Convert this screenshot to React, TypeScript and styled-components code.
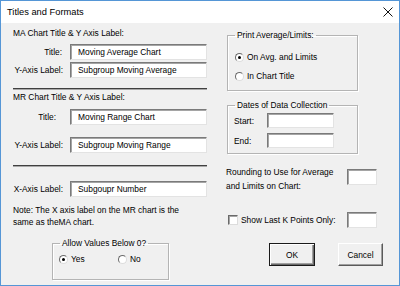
import styled, { createGlobalStyle } from "styled-components";

const GlobalStyle = createGlobalStyle`
  html, body {
    margin: 0;
    padding: 0;
    background: #ffffff;
  }
  * {
    box-sizing: border-box;
  }
`;

function CloseIcon() {
  return (
    <svg width="10" height="10" viewBox="0 0 10 10">
      <path d="M0.5 0.5 L9.5 9.5 M9.5 0.5 L0.5 9.5" stroke="#111" strokeWidth="1" fill="none" />
    </svg>
  );
}

function LabeledInput({ label, value, pr, top }: { label: string; value?: string; pr: number; top: number }) {
  return (
    <Row $top={top}>
      <FieldLabel $pr={pr}>{label}</FieldLabel>
      <TextBox $w={137}>{value}</TextBox>
    </Row>
  );
}

export default function App() {
  return (
    <>
      <GlobalStyle />
      <Dialog>
        <TitleBar>
          <TitleText>Titles and Formats</TitleText>
          <CloseIcon />
        </TitleBar>
        <Body>
          <LeftColumn>
            <Header>MA Chart Title &amp; Y Axis Label:</Header>
            <LabeledInput top={5} pr={8} label="Title:" value="Moving Average Chart" />
            <LabeledInput top={2} pr={7} label="Y-Axis Label:" value="Subgroup Moving Average" />
            <Separator $top={10} />
            <Header $top={1}>MR Chart Title &amp; Y Axis Label:</Header>
            <LabeledInput top={6} pr={14} label="Title:" value="Moving Range Chart" />
            <LabeledInput top={12} pr={7} label="Y-Axis Label:" value="Subgroup Moving Range" />
            <Separator $top={12} />
            <LabeledInput top={14} pr={7} label="X-Axis Label:" value="Subgoupr Number" />
            <Note>
              Note: The X axis label on the MR chart is the
              <br />
              same as theMA chart.
            </Note>
            <Group $w={117} $h={43} $top={9} $left={39}>
              <Legend>Allow Values Below 0?</Legend>
              <RadioRow $top={4} $left={6}>
                <RadioItem $w={59}>
                  <Radio $on />
                  Yes
                </RadioItem>
                <RadioItem>
                  <Radio />
                  No
                </RadioItem>
              </RadioRow>
            </Group>
          </LeftColumn>
          <RightColumn>
            <Group $w={131} $h={62} $top={2} $left={1}>
              <Legend>Print Average/Limits:</Legend>
              <RadioRow $top={10} $left={7}>
                <RadioItem>
                  <Radio $on />
                  On Avg. and Limits
                </RadioItem>
              </RadioRow>
              <RadioRow $top={7} $left={7}>
                <RadioItem>
                  <Radio />
                  In Chart Title
                </RadioItem>
              </RadioRow>
            </Group>
            <Group $w={131} $h={55} $top={8} $left={1}>
              <Legend>Dates of Data Collection</Legend>
              <DateRow $top={2}>
                <DateLabel>Start:</DateLabel>
                <TextBox $w={67} $h={15} />
              </DateRow>
              <DateRow $top={5}>
                <DateLabel>End:</DateLabel>
                <TextBox $w={67} $h={15} />
              </DateRow>
            </Group>
            <OptionRow $top={11}>
              <Caption>
                Rounding to Use for Average
                <br />
                and Limits on Chart:
              </Caption>
              <SmallBox $top={4} />
            </OptionRow>
            <OptionRow $top={19} $center>
              <CheckLabel>
                <CheckBox />
                Show Last K Points Only:
              </CheckLabel>
              <SmallBox />
            </OptionRow>
            <ButtonRow>
              <Button $default $w={46}>OK</Button>
              <Button $w={45}>Cancel</Button>
            </ButtonRow>
          </RightColumn>
        </Body>
      </Dialog>
    </>
  );
}

const Dialog = styled.div`
  width: 400px;
  height: 286px;
  border: 1px solid #5596d6;
  background: #f0f0f0;
  display: flex;
  flex-direction: column;
  font-family: "Liberation Sans", Arial, sans-serif;
  font-size: 8.4px;
  color: #000;
`;

const TitleBar = styled.div`
  height: 22px;
  flex-shrink: 0;
  background: #ffffff;
  display: flex;
  align-items: center;
  justify-content: space-between;
  padding: 0 6px 0 6px;
`;

const TitleText = styled.div`
  font-size: 9.3px;
  color: #000;
`;

const Body = styled.div`
  flex: 1;
  display: flex;
  gap: 19px;
  padding: 4px 0 0 12px;
`;

const LeftColumn = styled.div`
  width: 194px;
  display: flex;
  flex-direction: column;
`;

const RightColumn = styled.div`
  width: 157px;
  display: flex;
  flex-direction: column;
`;

const Header = styled.div<{ $top?: number }>`
  height: 12px;
  line-height: 12px;
  margin-top: ${(p) => p.$top ?? 0}px;
`;

const Row = styled.div<{ $top: number }>`
  display: flex;
  align-items: center;
  margin-top: ${(p) => p.$top}px;
`;

const FieldLabel = styled.div<{ $pr: number }>`
  width: 57px;
  text-align: right;
  padding-right: ${(p) => p.$pr}px;
  white-space: nowrap;
`;

const TextBox = styled.div<{ $w: number; $h?: number }>`
  width: ${(p) => p.$w}px;
  height: ${(p) => p.$h ?? 16}px;
  background: #ffffff;
  border: 1px solid;
  border-color: #7a7a7a #e3e3e3 #e3e3e3 #7a7a7a;
  box-shadow: inset 1px 1px 0 #a5a5a5;
  padding-left: 7px;
  display: flex;
  align-items: center;
  white-space: nowrap;
  overflow: hidden;
`;

const Separator = styled.div<{ $top: number }>`
  height: 2px;
  margin-top: ${(p) => p.$top}px;
  border-top: 1px solid #404040;
  border-bottom: 1px solid #a8a8a8;
`;

const Note = styled.div`
  margin-top: 7px;
  line-height: 12px;
  white-space: nowrap;
`;

const Group = styled.fieldset<{ $w: number; $h: number; $top: number; $left: number }>`
  width: ${(p) => p.$w}px;
  height: ${(p) => p.$h}px;
  margin: ${(p) => p.$top}px 0 0 ${(p) => p.$left}px;
  padding: 0;
  border: 1px solid #b4b4b4;
  box-shadow: inset 1px 1px 0 #ffffff, 1px 1px 0 #ffffff;
  display: flex;
  flex-direction: column;
  flex-shrink: 0;
`;

const Legend = styled.legend`
  margin-left: 7px;
  padding: 0 2px;
  height: 12px;
  line-height: 12px;
`;

const RadioRow = styled.div<{ $top: number; $left: number }>`
  display: flex;
  align-items: center;
  height: 12px;
  margin-top: ${(p) => p.$top}px;
  padding-left: ${(p) => p.$left}px;
`;

const RadioItem = styled.label<{ $w?: number }>`
  display: flex;
  align-items: center;
  gap: 3px;
  width: ${(p) => (p.$w ? `${p.$w}px` : "auto")};
  white-space: nowrap;
`;

const Radio = styled.span<{ $on?: boolean }>`
  width: 9px;
  height: 9px;
  border-radius: 50%;
  background: #ffffff;
  border: 1px solid;
  border-color: #6a6a6a #dcdcdc #dcdcdc #6a6a6a;
  display: flex;
  align-items: center;
  justify-content: center;
  flex-shrink: 0;
  &::after {
    content: "";
    display: ${(p) => (p.$on ? "block" : "none")};
    width: 3px;
    height: 3px;
    border-radius: 50%;
    background: #000;
  }
`;

const DateRow = styled.div<{ $top: number }>`
  display: flex;
  align-items: center;
  margin-top: ${(p) => p.$top}px;
  padding-left: 6px;
`;

const DateLabel = styled.div`
  width: 33px;
`;

const OptionRow = styled.div<{ $top: number; $center?: boolean }>`
  display: flex;
  justify-content: space-between;
  align-items: ${(p) => (p.$center ? "center" : "flex-start")};
  margin-top: ${(p) => p.$top}px;
  padding-right: 6px;
`;

const Caption = styled.div`
  line-height: 14px;
  white-space: nowrap;
`;

const SmallBox = styled.div<{ $top?: number }>`
  width: 30px;
  height: 16px;
  margin-top: ${(p) => p.$top ?? 0}px;
  background: #ffffff;
  border: 1px solid;
  border-color: #7a7a7a #e3e3e3 #e3e3e3 #7a7a7a;
  box-shadow: inset 1px 1px 0 #a5a5a5;
`;

const CheckLabel = styled.label`
  display: flex;
  align-items: center;
  gap: 3px;
  padding-left: 2px;
  white-space: nowrap;
`;

const CheckBox = styled.span`
  width: 10px;
  height: 10px;
  background: #ffffff;
  border: 1px solid;
  border-color: #6a6a6a #dcdcdc #dcdcdc #6a6a6a;
  box-shadow: inset 1px 1px 0 #a5a5a5;
`;

const ButtonRow = styled.div`
  display: flex;
  justify-content: flex-end;
  gap: 23px;
  margin-top: 15px;
`;

const Button = styled.div<{ $default?: boolean; $w: number }>`
  width: ${(p) => p.$w}px;
  height: 23px;
  display: flex;
  align-items: center;
  justify-content: center;
  background: #f0f0f0;
  border: 1px solid;
  border-color: ${(p) => (p.$default ? "#1a1a1a" : "#ffffff #5a5a5a #5a5a5a #ffffff")};
  box-shadow: ${(p) =>
    p.$default
      ? "inset 1px 1px 0 #ffffff, inset -1px -1px 0 #6a6a6a, inset -2px -2px 0 #a0a0a0"
      : "inset -1px -1px 0 #a0a0a0"};
`;
